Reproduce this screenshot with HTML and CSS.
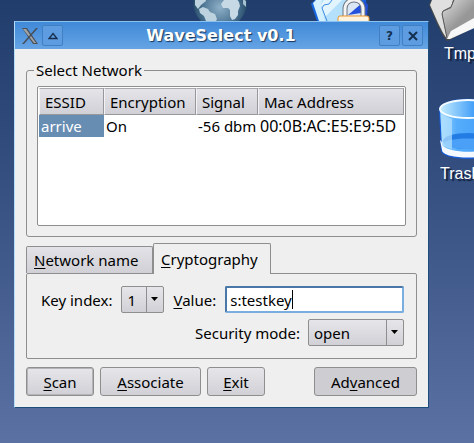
FILE: index.html
```html
<!DOCTYPE html>
<html lang="en">
<head>
    <meta charset="UTF-8">
    <meta name="viewport" content="width=device-width, initial-scale=1.0">
    <title>WaveSelect v0.1</title>
    <link rel="stylesheet" href="styles.css">
</head>
<body>
    <!-- desktop icons -->
    <svg class="icon icon-globe" width="56" height="56" viewBox="0 0 56 56">
        <defs>
            <radialGradient id="sea" cx="0.5" cy="0.6" r="0.55">
                <stop offset="0" stop-color="#8fb0c8"/>
                <stop offset="0.6" stop-color="#4b7492"/>
                <stop offset="1" stop-color="#1c3e5c"/>
            </radialGradient>
        </defs>
        <circle cx="28" cy="26" r="27" fill="url(#sea)"/>
        <path d="M3 20h10l1 5-5 4-3 4-3-4zM7 33l4-2 5 2 2 3 5 2 2 5-2 4-4 1-5-3-2-5-4-3z" fill="#bdd2df"/>
        <path d="M32 24l12-2 3 4 1 4-2 5 0 4-3 4-3 1-2-4 0-6-2-2-5 0-2-4z" fill="#c6d9e5"/>
        <path d="M51 23l3 2 0 6-3-3z" fill="#a8c1d2"/>
    </svg>
    <svg class="icon icon-locked" width="66" height="22" viewBox="0 0 66 22">
        <path d="M5 0L1 4l6 17h49V0z" fill="#1668e0"/>
        <path d="M6 0L3 3l6 18h8L11 5l6-5z" fill="#d5f0ff"/>
        <path d="M12 0h26v21H15L11 5z" fill="#b4e0fc"/>
        <path d="M14 0h18L15 17 11 5z" fill="#e2f5ff"/>
        <path d="M17 21L12 8l2-3 5-1 3-4" fill="none" stroke="#3d8ce4" stroke-width="1"/>
        <path d="M54 0l4 5-1 11h-4z" fill="#2050d8"/>
        <path d="M35 16V9c0-11 18-11 18 0v7z" fill="#dce7f5"/>
        <path d="M51 4v9L38 15z" fill="#2452dc"/>
        <path d="M35 16V9c0-12 18-12 18 0v7" fill="none" stroke="#6d7482" stroke-width="5"/>
        <path d="M35 16V9c0-12 18-12 18 0v7" fill="none" stroke="#f4f4f4" stroke-width="3"/>
        <rect x="28" y="16" width="31" height="10" rx="2" fill="#fff3dd" stroke="#e7952a"/>
    </svg>
    <div class="desk-item desk-tmp">
        <svg width="80" height="42" viewBox="0 0 80 42">
            <defs>
                <linearGradient id="paper" x1="0" y1="0" x2="1" y2="1">
                    <stop offset="0" stop-color="#dedede"/>
                    <stop offset="0.5" stop-color="#979797"/>
                </linearGradient>
            </defs>
            <path d="M2 0l-2 5 8 19 6 12 4 5 3-1 30-16V0z" fill="#47484a"/>
            <path d="M3 0L1 5l8 18 5 10 4 6-5-25 1-3 8-4 2-7z" fill="#e0e0e0"/>
            <path d="M13 12l9-4 3-8h27v22L18 39z" fill="url(#paper)"/>
            <path d="M18 38l-5-24 1-3 8-4 3-7" fill="none" stroke="#5c5c5c"/>
            <path d="M18 39l4-8 30-17v11L21 39z" fill="#f7f7f7"/>
        </svg>
        <span>Tmp</span>
    </div>
    <div class="desk-item desk-trash">
        <svg width="60" height="64" viewBox="0 0 60 64">
            <defs>
                <linearGradient id="glass" x1="0" y1="0" x2="1" y2="0">
                    <stop offset="0" stop-color="#9bd5ff"/>
                    <stop offset="0.3" stop-color="#56adfb"/>
                    <stop offset="1" stop-color="#3d9af8"/>
                </linearGradient>
                <linearGradient id="rim" x1="0" y1="0" x2="1" y2="0">
                    <stop offset="0" stop-color="#c5edff"/>
                    <stop offset="0.8" stop-color="#1b86f5"/>
                </linearGradient>
            </defs>
            <path d="M1 12C1-3 59-3 59 12l-2 40c0 12-54 12-54 0z" fill="#155bd8"/>
            <path d="M2 42c8 12 48 12 56 0l-2 10c0 10-52 10-52 0z" fill="#f4f8ff"/>
            <path d="M2 12h56l-2 35c-6 9-46 9-52 0z" fill="url(#glass)"/>
            <ellipse cx="30" cy="43" rx="25" ry="8" fill="#237ce4"/>
            <path d="M5 45c5-6 45-6 50 0-5 8-45 8-50 0z" fill="#49a0f6"/>
            <path d="M3 16l11 5v30l-10-4z" fill="#b7e2ff" opacity=".7"/>
            <ellipse cx="30" cy="11" rx="28" ry="9" fill="url(#rim)" stroke="#f5fcff" stroke-width="2"/>
        </svg>
        <span>Trash</span>
    </div>

    <div class="window">
        <div class="titlebar">
            <svg class="app-logo" width="16" height="16" viewBox="0 0 16 16">
                <path d="M0 0h5l11 16h-5z" fill="#4c5157"/>
                <path d="M1 1h3l10 14h-2z" fill="#a0a5a9"/>
                <path d="M14 0h2L2 16H0z" fill="#484f58"/>
            </svg>
            <button class="title-btn" aria-label="Shade">
                <svg width="10" height="8" viewBox="0 0 10 8"><path d="M5 1.5L9 6.5H1z" fill="none" stroke="#182e4c" stroke-width="1.3"/></svg>
            </button>
            <h1>WaveSelect v0.1</h1>
            <button class="title-btn" aria-label="Help">?</button>
            <button class="title-btn" aria-label="Close">
                <svg width="10" height="10" viewBox="0 0 10 10"><path d="M1 1l8 8M9 1L1 9" stroke="#14304f" stroke-width="2"/></svg>
            </button>
        </div>

        <div class="content">
            <fieldset>
                <legend>Select Network</legend>
                <div class="list">
                    <table>
                        <colgroup>
                            <col class="col-essid">
                            <col class="col-enc">
                            <col class="col-signal">
                            <col>
                        </colgroup>
                        <thead>
                            <tr><th>ESSID</th><th>Encryption</th><th>Signal</th><th>Mac Address</th></tr>
                        </thead>
                        <tbody>
                            <tr><td class="selected">arrive</td><td>On</td><td class="signal">-56 dbm</td><td class="mac">00:0B:AC:E5:E9:5D</td></tr>
                        </tbody>
                    </table>
                </div>
            </fieldset>

            <div class="tabs">
                <button class="tab"><u>N</u>etwork name</button>
                <button class="tab active"><u>C</u>ryptography</button>
            </div>
            <div class="panel">
                <div class="row">
                    <label for="key">Key index:</label>
                    <select id="key" class="key"><option>1</option></select>
                    <label for="value"><u>V</u>alue:</label>
                    <div class="textbox">
                        <input type="text" id="value" value="s:testkey">
                        <span class="caret"></span>
                    </div>
                </div>
                <div class="row row-right">
                    <label for="mode">Security mode:</label>
                    <select id="mode" class="mode"><option>open</option></select>
                </div>
            </div>

            <div class="buttons">
                <button class="btn default"><u>S</u>can</button>
                <button class="btn associate"><u>A</u>ssociate</button>
                <button class="btn exit"><u>E</u>xit</button>
                <button class="btn advanced">Ad<u>v</u>anced</button>
            </div>
        </div>
    </div>
</body>
</html>
```

FILE: styles.css
```css
* {
    box-sizing: border-box;
}

html {
    min-height: 100%;
    background: linear-gradient(#213d6c, #344f80 40%, #5b71a4);
}

body {
    margin: 0;
    padding: 21px 45px 35px 14px;
    overflow: hidden;
    font-family: "Noto Sans", sans-serif;
    font-size: 15px;
    line-height: 20px;
    color: #000;
}

button, input, select {
    font: inherit;
    color: inherit;
    margin: 0;
}

u {
    text-decoration-thickness: 1px;
    text-decoration-skip-ink: none;
    text-underline-offset: 2px;
}

/* desktop */
.icon {
    position: absolute;
}

.icon-globe {
    left: 192px;
    top: -24px;
}

.icon-locked {
    left: 310px;
    top: 0;
}

.desk-item {
    position: absolute;
    width: 80px;
    color: #fff;
    font-family: "Liberation Sans", sans-serif;
    font-size: 16px;
    text-shadow: 2px 2px 1px #101c38;
}

.desk-item svg,
.desk-item span {
    display: block;
}

.desk-tmp {
    left: 429px;
    top: 0;
}

.desk-tmp span {
    padding: 2px 15px;
}

.desk-trash {
    left: 438px;
    top: 98px;
}

.desk-trash span {
    padding: 2px;
}

/* window */
.window {
    position: relative;
    background: #efefef;
    border: 1px solid #1d4d7c;
    border-left-color: #b5dcf8;
    border-top-color: #8ac1ee;
}

.titlebar {
    display: flex;
    align-items: center;
    gap: 2px;
    height: 27px;
    padding: 0 5px 0 7px;
    background: linear-gradient(#4089d8, #66a4e4);
}

.titlebar h1 {
    flex: 1;
    margin: 0;
    text-align: center;
    font-family: "DejaVu Sans", sans-serif;
    font-size: 16px;
    color: #fff;
    text-shadow: 1px 1px 1px #16365c;
}

.app-logo {
    margin-right: 2px;
}

.title-btn {
    display: flex;
    align-items: center;
    justify-content: center;
    width: 21px;
    height: 21px;
    padding: 0;
    border: 1px solid #4080c2;
    border-radius: 2px;
    background: #5d9ce0;
    font-family: "DejaVu Sans", sans-serif;
    font-size: 12px;
    font-weight: bold;
    color: #14304f;
}

.content {
    padding: 11px;
}

fieldset {
    margin: 0;
    padding: 6px 10px 10px;
    border: 1px solid #8e8e8e;
    border-radius: 3px;
}

legend {
    margin-left: -3px;
    padding: 0 2px;
}

.list {
    height: 140px;
    padding: 1px;
    border: 1px solid #8e8e8e;
    border-radius: 2px;
    background: #fff;
}

table {
    width: 100%;
    table-layout: fixed;
    border-collapse: separate;
    border-spacing: 0;
}

.col-essid {
    width: 65px;
}

.col-enc {
    width: 92px;
}

.col-signal {
    width: 62px;
}

th {
    height: 27px;
    padding: 0 5px;
    border: 1px solid #98989c;
    border-top-color: #aaaaae;
    border-left-color: #f3f3f6;
    background: linear-gradient(#e4e4e9, #d0d0d6);
    font-weight: normal;
    text-align: left;
}

td {
    height: 22px;
    padding: 0 2px;
    white-space: nowrap;
}

.signal {
    text-align: right;
}

.mac {
    font-size: 16px;
}

.selected {
    background: #678db2;
    color: #fff;
}

/* tabs */
.tabs {
    display: flex;
    align-items: flex-end;
    margin-top: 6px;
}

.tab {
    height: 27px;
    width: 127px;
    padding: 0 7px;
    border: 1px solid #8e8e8e;
    border-bottom: 0;
    border-radius: 2px 2px 0 0;
    background: linear-gradient(#e2e2e7, #d0d0d6);
    text-align: left;
}

.tab.active {
    position: relative;
    height: 31px;
    width: 118px;
    margin-bottom: -1px;
    background: #efefef;
}

.panel {
    display: flex;
    flex-direction: column;
    gap: 6px;
    padding: 12px;
    border: 1px solid #8e8e8e;
    border-radius: 2px;
}

.row {
    display: flex;
    align-items: center;
    gap: 9px;
    padding-left: 2px;
}

.row-right {
    justify-content: flex-end;
    gap: 8px;
}

select {
    appearance: none;
    height: 27px;
    padding: 0 5px;
    border: 1px solid #8e8e8e;
    border-radius: 2px;
    background:
        url("data:image/svg+xml,%3Csvg xmlns='http://www.w3.org/2000/svg' width='17' height='25'%3E%3Cpath d='M.5 0v25' stroke='%238e8e8e'/%3E%3Cpath d='M5 10h7l-3.5 4z'/%3E%3C/svg%3E") right center no-repeat,
        linear-gradient(#e6e6ea, #d0d0d6);
}

.key {
    width: 43px;
}

.mode {
    width: 96px;
}

.textbox {
    display: flex;
    align-items: center;
    flex: 1;
    height: 27px;
    padding: 0 3px;
    border: 2px solid #7baee0;
    border-top-color: #4877a8;
    border-left-color: #4877a8;
    border-radius: 2px;
    background: #fff;
}

.textbox input {
    field-sizing: content;
    padding: 0;
    border: 0;
    outline: 0;
    background: none;
    caret-color: transparent;
}

.caret {
    width: 1px;
    height: 19px;
    background: #000;
}

/* bottom buttons */
.buttons {
    display: flex;
    gap: 6px;
    margin-top: 8px;
}

.btn {
    width: 68px;
    height: 29px;
    padding: 0;
    border: 1px solid #8e8e8e;
    border-radius: 3px;
    background: linear-gradient(#e6e6ea, #d0d0d6);
}

.btn.default {
    box-shadow: inset 0 0 0 1px #b4b4b8;
}

.btn.associate {
    width: 101px;
}

.btn.exit {
    width: 58px;
}

.btn.advanced {
    width: 103px;
    margin-left: auto;
    background: #cdcdd2;
}
```
